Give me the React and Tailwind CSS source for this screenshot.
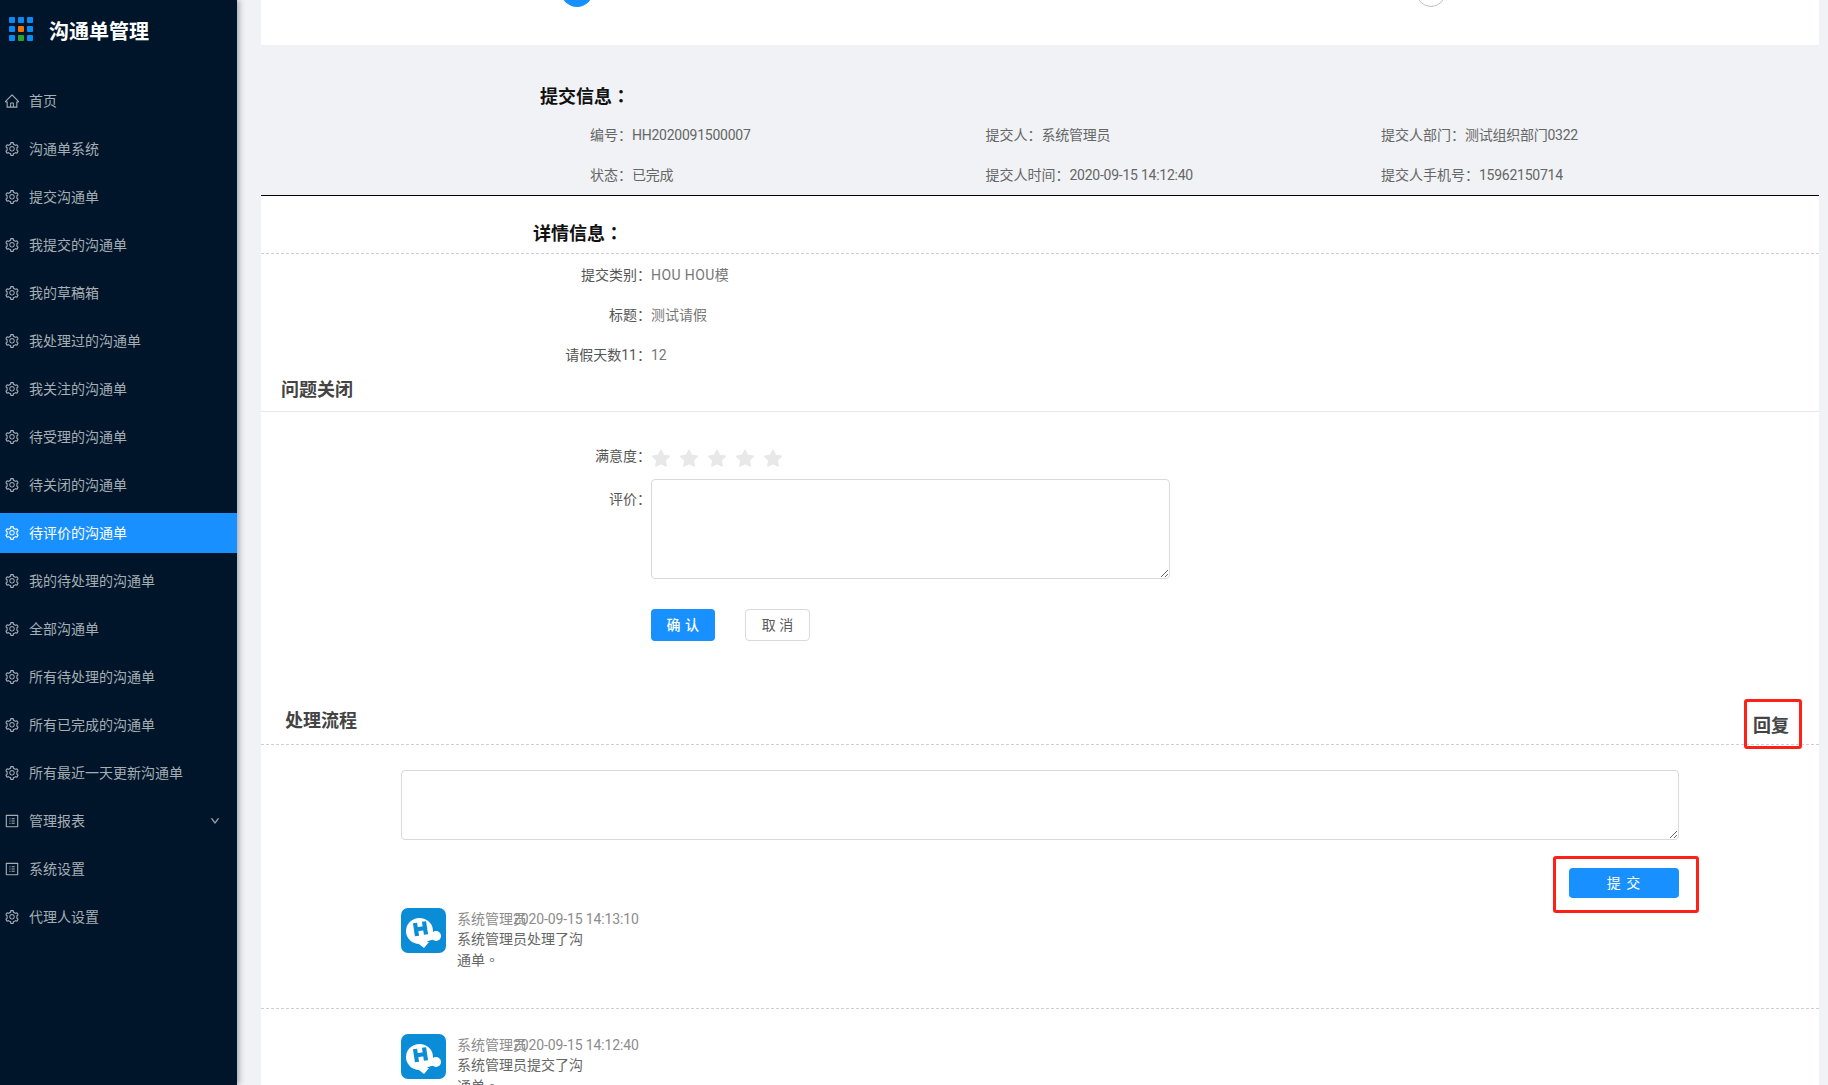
import React from 'react';
import { AiOutlineHome, AiOutlineSetting, AiOutlineProfile, AiFillStar, AiOutlineDown } from 'react-icons/ai';

const menus = [
  { label: '首页', icon: 'home' },
  { label: '沟通单系统', icon: 'set' },
  { label: '提交沟通单', icon: 'set' },
  { label: '我提交的沟通单', icon: 'set' },
  { label: '我的草稿箱', icon: 'set' },
  { label: '我处理过的沟通单', icon: 'set' },
  { label: '我关注的沟通单', icon: 'set' },
  { label: '待受理的沟通单', icon: 'set' },
  { label: '待关闭的沟通单', icon: 'set' },
  { label: '待评价的沟通单', icon: 'set', active: true },
  { label: '我的待处理的沟通单', icon: 'set' },
  { label: '全部沟通单', icon: 'set' },
  { label: '所有待处理的沟通单', icon: 'set' },
  { label: '所有已完成的沟通单', icon: 'set' },
  { label: '所有最近一天更新沟通单', icon: 'set' },
  { label: '管理报表', icon: 'profile', arrow: true },
  { label: '系统设置', icon: 'profile' },
  { label: '代理人设置', icon: 'set' },
];

const dots = ['#0a8cf5', '#0a8cf5', '#0a8cf5', '#0a8cf5', '#f5720a', '#0a8cf5', '#0a8cf5', '#2aa52a', '#0a8cf5'];

const infoRows = [
  [['编号：', 'HH2020091500007'], ['提交人：', '系统管理员'], ['提交人部门：', '测试组织部门0322']],
  [['状态：', '已完成'], ['提交人时间：', '2020-09-15 14:12:40'], ['提交人手机号：', '15962150714']],
];

const details = [
  ['提交类别：', 'HOU HOU模', 'tracking-[0.4px]'],
  ['标题：', '测试请假', ''],
  ['请假天数11：', '12', ''],
];

const flows = [
  { time: '2020-09-15 14:13:10', text: '系统管理员处理了沟通单' },
  { time: '2020-09-15 14:12:40', text: '系统管理员提交了沟通单' },
];

const MenuIcon = ({ type }) => {
  if (type === 'home') return <AiOutlineHome size={16} />;
  if (type === 'profile') return <AiOutlineProfile size={16} />;
  return <AiOutlineSetting size={16} />;
};

const Avatar = () => (
  <svg viewBox="0 0 45 45" className="w-[45px] h-[45px] shrink-0">
    <rect width="45" height="45" rx="7" fill="#0a8dd6" />
    <ellipse cx="18.500" cy="23" rx="13.500" ry="13" fill="#fff" />
    <circle cx="35" cy="28" r="5" fill="#fff" />
    <path d="M26 25l6-1 2 7-7 2z" fill="#fff" />
    <path d="M14 33l9 7 5-6z" fill="#fff" />
    <path d="M14 15l2 13M23 13.500l2 13M15 21.500l9-1.500" stroke="#0a8dd6" strokeWidth="4.200" fill="none" />
  </svg>
);

const Sidebar = () => (
  <aside className="w-[237px] h-full shrink-0 bg-[#001529] shadow-[2px_0_6px_rgba(0,21,41,0.35)] z-10">
    <div className="flex items-center h-[81px] pb-[24px] pl-[9px]">
      <div className="grid grid-cols-3 gap-[3px] w-[24px]">
        {dots.map((c, i) => (
          <span key={i} className="w-[6px] h-[6px] rounded-[1px]" style={{ backgroundColor: c }} />
        ))}
      </div>
      <span className="ml-[16px] mt-[6px] text-[20px] font-bold text-white leading-none">沟通单管理</span>
    </div>
    <nav className="flex flex-col gap-[8px]">
      {menus.map((m) => (
        <div
          key={m.label}
          className={`flex items-center h-[40px] pl-[4px] pr-[17px] text-[14px] ${m.active ? 'bg-[#1890ff] text-white' : 'text-[#a6adb4]'}`}
        >
          <MenuIcon type={m.icon} />
          <span className="ml-[9px] flex-1">{m.label}</span>
          {m.arrow && <AiOutlineDown size={10} strokeWidth={60} />}
        </div>
      ))}
    </nav>
  </aside>
);

const FlowItem = ({ item }) => (
  <div className="flex gap-[11px] h-[100px] pl-[140px] border-b border-dashed border-[#d0d0d0] overflow-hidden box-content">
    <Avatar />
    <div className="text-[14px] pt-px">
      <div className="flex leading-[20px] text-[#8c8c8c] whitespace-nowrap">
        <span className="w-[56px]">系统管理员</span>
        <span className="tracking-[-0.12px]">{item.time}</span>
      </div>
      <p className="w-[130px] leading-[21px] text-[#666]">
        {item.text}
        <span className="leading-none font-['Noto_Sans_CJK_TC']">。</span>
      </p>
    </div>
  </div>
);

export default function App() {
  return (
    <div className="flex h-screen overflow-hidden bg-[#f0f2f5] font-['Roboto','Noto_Sans_CJK_SC',sans-serif]">
      <Sidebar />
      <main className="flex-1 ml-[24px] mr-[9px] h-full overflow-hidden">
        {/* 步骤条，页面已向下滚动，只露出圆点底部 */}
        <div className="h-[45px] bg-white overflow-hidden">
          <div className="flex -mt-[25px] pl-[300px]">
            <span className="w-[32px] h-[32px] rounded-full bg-[#1890ff]" />
            <span className="ml-[823px] mt-[2px] w-[30px] h-[30px] rounded-full bg-white border border-[#bfbfbf]" />
          </div>
        </div>

        <section className="h-[151px] border-b border-black">
          <h3 className="pl-[279px] pt-[38px] pb-[5px] text-[18px] leading-[27px] font-bold text-[#111]">
            提交信息<span className="leading-none font-['Noto_Sans_CJK_TC']">：</span>
          </h3>
          {infoRows.map((row, i) => (
            <div key={i} className="grid grid-cols-[395.5px_395.5px_395.5px] pl-[329px] h-[40px] items-center text-[14px] text-[#666]">
              {row.map(([k, v]) => (
                <span key={k}>{k}<span className="tracking-[-0.25px]">{v}</span></span>
              ))}
            </div>
          ))}
        </section>

        <div className="bg-white h-full">
          <h3 className="pl-[272px] pt-[24px] pb-[6px] text-[18px] leading-[27px] font-bold text-[#111] border-b border-dashed border-[#d0d0d0] box-content">
            详情信息<span className="leading-none font-['Noto_Sans_CJK_TC']">：</span>
          </h3>
          <div className="pt-px">
            {details.map(([k, v, cls]) => (
              <div key={k} className="flex h-[40px] items-center text-[14px]">
                <span className="w-[390px] text-right text-[#555]">{k}</span>
                <span className={`text-[#777] ${cls}`}>{v}</span>
              </div>
            ))}
          </div>

          <h3 className="pl-[20px] pt-px pb-[8px] text-[18px] leading-[27px] font-bold text-[#444] border-b border-[#e8e8e8]">问题关闭</h3>

          <div className="flex pt-[34px] text-[14px] leading-[20px]">
            <span className="w-[390px] text-right text-[#555]">满意度：</span>
            <div className="flex gap-[6px] -ml-px mt-[2px] text-[#e8e8e8]">
              {[1, 2, 3, 4, 5].map((n) => <AiFillStar key={n} size={22} />)}
            </div>
          </div>

          <div className="flex mt-[9px] text-[14px] leading-[20px]">
            <span className="w-[390px] pt-[10px] text-right text-[#555]">评价：</span>
            <textarea className="w-[519px] h-[100px] border border-[#d9d9d9] rounded-[4px] bg-white outline-none" />
          </div>

          <div className="flex mt-[30px] pl-[390px] gap-[30px] text-[14px]">
            <button className="w-[64px] h-[32px] rounded-[4px] bg-[#1890ff] text-white font-medium tracking-[0.5px]">确 认</button>
            <button className="w-[65px] h-[32px] rounded-[4px] bg-white border border-[#d9d9d9] text-[#595959]">取 消</button>
          </div>

          <div className="flex justify-between mt-[66px] pl-[24px] pr-[30px] border-b border-dashed border-[#d0d0d0] h-[37px] box-content">
            <h3 className="text-[18px] leading-[27px] font-bold text-[#444]">处理流程</h3>
            <span className="relative mt-[5px] h-[27px] text-[18px] leading-[27px] font-bold text-[#444]">
              回复
              <span className="absolute -left-[9px] -right-[13px] -top-[13px] -bottom-[10px] border-[3px] border-[#ff2116] rounded-[3px]" />
            </span>
          </div>

          <div className="pl-[140px] mt-[25px]">
            <textarea className="block w-[1278px] h-[70px] border border-[#d9d9d9] rounded-[4px] bg-white outline-none" />
            <div className="flex justify-end w-[1278px] mt-[28px]">
              <button className="relative w-[110px] h-[30px] rounded-[4px] bg-[#1890ff] text-white text-[14px] tracking-[1px]">
                提 交
                <span className="absolute -left-[16px] -right-[20px] -top-[12px] -bottom-[15px] border-[3px] border-[#ff2116] rounded-[3px]" />
              </button>
            </div>
          </div>

          <div className="mt-[10px] flex flex-col gap-[25px]">
            {flows.map((f) => <FlowItem key={f.time} item={f} />)}
          </div>
        </div>
      </main>
    </div>
  );
}
